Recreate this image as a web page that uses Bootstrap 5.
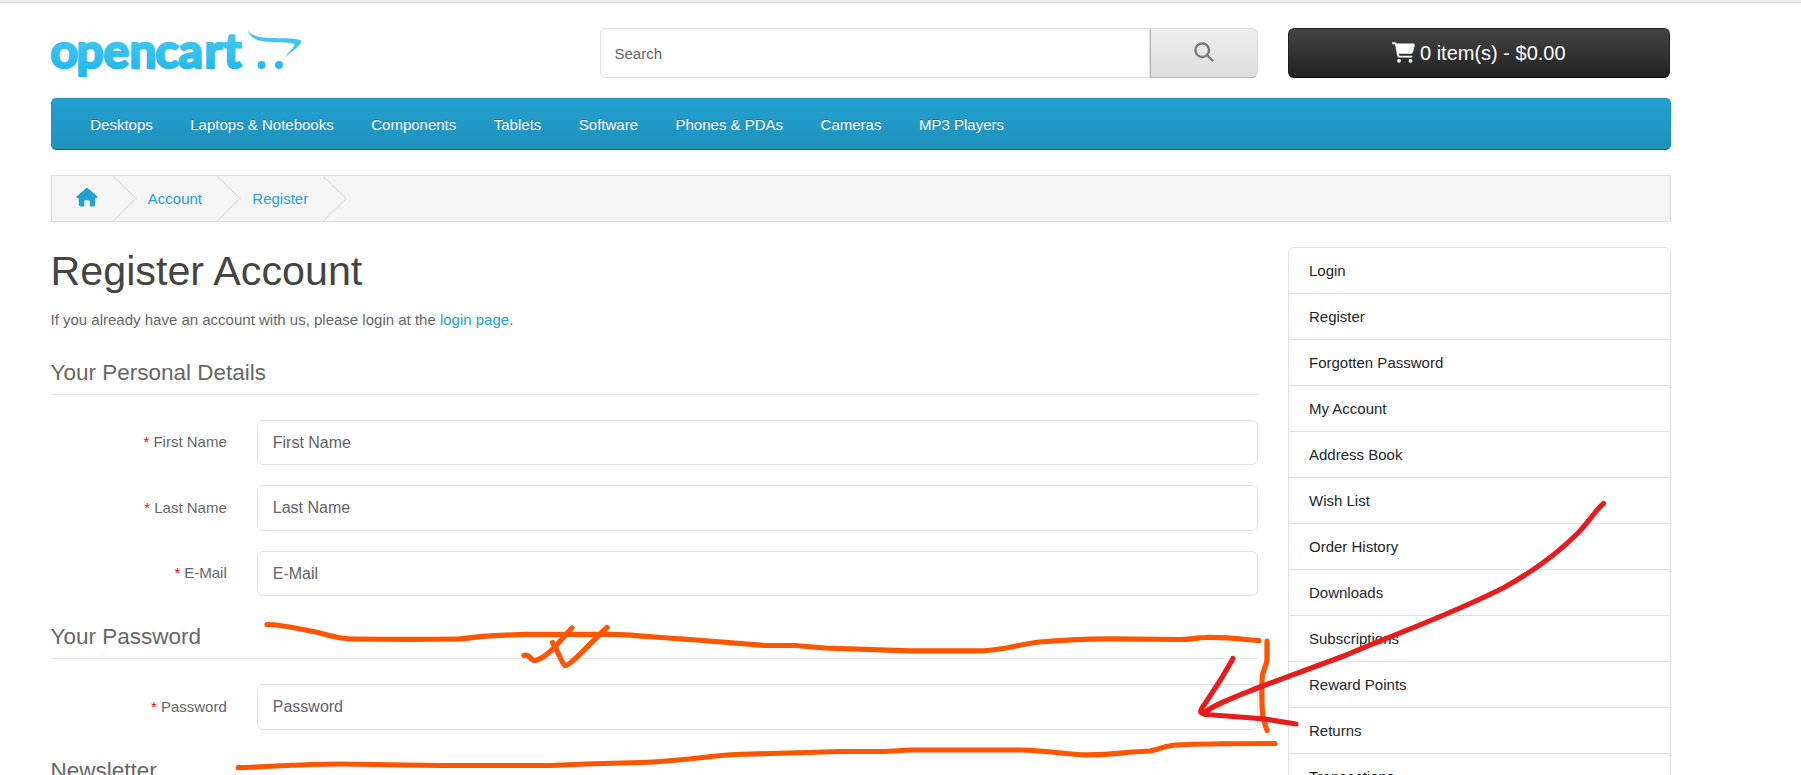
<!DOCTYPE html>
<html lang="en">
<head>
<meta charset="utf-8">
<title>Register Account</title>
<link href="https://cdn.jsdelivr.net/npm/bootstrap@5.3.0/dist/css/bootstrap.min.css" rel="stylesheet">
<style>
body{font-family:"Liberation Sans",Arial,sans-serif;font-size:15px;line-height:22.5px;color:#666;background:#fff;height:775px;overflow:hidden;position:relative}
a{color:#23a1d1;text-decoration:none}
.topstrip{height:3px;background:#eee;border-bottom:1px solid #ddd}
.shell{width:1650px;margin-left:35.5px;padding:0 15px}
.shell .row{--bs-gutter-x:30px}
.site-head{padding-top:25px;height:95px}
.search-box .form-control{height:50px;font-size:15px;border-color:#dee2e6;padding:0 13px;border-radius:6px 0 0 6px}
.form-control::placeholder{color:#5f6266;opacity:1}
.btn-search{width:108px;height:50px;background:linear-gradient(#eee,#ddd);border:1px solid #ddd;border-color:#ddd #ddd #b3b3b3 #b3b3b3;border-radius:0 6px 6px 0;padding:0 0 4px}
.btn-cart{height:50px;background:linear-gradient(#444,#222);border:1px solid #222;border-bottom-color:#000;border-radius:6px;color:#fff;font-size:20px;line-height:30px;padding:0 1px 0 0}
.menu-bar{height:52px;background:linear-gradient(#23a1d1,#1f90bb);border:1px solid #1f90bb;border-bottom-color:#145e7a;border-radius:5px;padding:0 0 0 20px}
.menu-bar .nav-link{color:#fff;padding:14px 18.75px;line-height:24px;text-shadow:0 -1px 0 rgba(0,0,0,.25)}
.crumbs{height:47px;margin:25px 0;background:#f5f5f5;border:1px solid #ddd;padding-left:24px}
.crumbs svg{display:block}
.crumbs a{padding-top:1px}
.crumb-sep{margin:0 11px 0 15.3px}
h1{font-size:41.25px;line-height:49px;color:#444;font-weight:400;margin:0 0 13px}
.sect{font-size:22.5px;line-height:34px;border-bottom:1px solid #e5e5e5;margin:24px 0 25px;padding-bottom:4px;color:#666}
.field{margin-bottom:20px}
.field .form-control{height:45.5px;font-size:16px;padding:1px 15px 0;border-color:#dee2e6;border-radius:6px}
.field label{padding-top:11.5px;line-height:22px}
.req{color:#f00;margin-right:4px;font-weight:400}
.side .list-group-item{height:46px;padding:11px 20px;line-height:23px;color:#212529;border-color:#dee2e6}
.side .list-group-item:first-child{height:47px}
.ink{position:absolute;left:0;top:0;pointer-events:none}
</style>
</head>
<body>
<div class="topstrip"></div>
<div class="shell">
  <header class="row site-head">
    <div class="col-4">
      <svg width="256" height="54" viewBox="51 26 256 54" class="d-block" style="overflow:visible">
        <defs><linearGradient id="lg" gradientUnits="userSpaceOnUse" x1="0" y1="28" x2="0" y2="68"><stop offset="0" stop-color="#4bcaf0"/><stop offset="1" stop-color="#23b8ec"/></linearGradient></defs>
        <text x="50.500 76.500 103.500 129.500 155.500 178.500 204.500 223.500" y="65.500" font-family="Lato" font-weight="700" font-size="48" fill="url(#lg)" stroke="url(#lg)" stroke-width="2.600" stroke-linejoin="round">opencart</text>
        <g fill="url(#lg)"><path d="M247.500 28.500C253 34.500 260 35.800 270 36C285 36.300 301 36 301.500 39.500C301 43 295 46.500 285 55.500C289 49.500 294.500 45 294.500 42.800C294 39.800 276 41 265 39.500C256 38.500 250 35 247.500 28.500Z"/><circle cx="261.500" cy="63" r="4"/><circle cx="279" cy="63" r="4"/></g>
      </svg>
    </div>
    <div class="col-5">
      <div class="d-flex search-box">
        <input class="form-control" placeholder="Search">
        <button class="btn btn-search flex-shrink-0" aria-label="Search"><svg width="20" height="20" viewBox="0 0 20 20" fill="none" stroke="#777" stroke-width="2.300"><circle cx="8.200" cy="8.200" r="6.800"/><path d="M13 13l6 6"/></svg></button>
      </div>
    </div>
    <div class="col-3"><button class="btn btn-cart w-100"><svg width="23" height="21" viewBox="0 0 576 512" fill="#fff" style="vertical-align:-3px;margin-right:-.5px"><path d="M0 24C0 10.700 10.700 0 24 0H69.500c22 0 41.500 12.800 50.600 32h411c26.300 0 45.500 25 38.600 50.400l-41 152.300c-8.500 31.400-37 53.300-69.500 53.300H170.700l5.400 28.500c2.200 11.300 12.100 19.500 23.600 19.500H488c13.300 0 24 10.700 24 24s-10.700 24-24 24H199.700c-34.600 0-64.300-24.600-70.700-58.500L77.400 54.500c-.7-3.800-4-6.500-7.900-6.500H24C10.700 48 0 37.300 0 24zM128 464a48 48 0 1 1 96 0 48 48 0 1 1-96 0zm336-48a48 48 0 1 1 0 96 48 48 0 1 1 0-96z"/></svg> 0 item(s) - $0.00</button></div>
  </header>
  <nav class="menu-bar">
    <ul class="nav flex-nowrap">
      <li><a class="nav-link" href="#">Desktops</a></li><li><a class="nav-link" href="#">Laptops &amp; Notebooks</a></li><li><a class="nav-link" href="#">Components</a></li><li><a class="nav-link" href="#">Tablets</a></li><li><a class="nav-link" href="#">Software</a></li><li><a class="nav-link" href="#">Phones &amp; PDAs</a></li><li><a class="nav-link" href="#">Cameras</a></li><li><a class="nav-link" href="#">MP3 Players</a></li>
    </ul>
  </nav>
  <div class="crumbs d-flex align-items-center">
    <a href="#" aria-label="Home"><svg width="22" height="20" viewBox="0 0 22 20" fill="#23a1d1" style="margin-bottom:4px"><path d="M11 .5L21.500 9.600Q22 11 20.600 11.200H19.200V17.500Q19.200 19.500 17.300 19.500H13.800V14.500Q13.800 13.200 12.500 13.200H9.600Q8.300 13.200 8.300 14.500V19.500H4.800Q2.800 19.500 2.800 17.500V11.200H1.400Q0 11 .5 9.600Z"/></svg></a>
    <svg class="crumb-sep" width="24" height="45" fill="none" stroke="#ddd" stroke-width="1.200"><path d="M0 0L23 22.500L0 45"/></svg>
    <a href="#">Account</a>
    <svg class="crumb-sep" width="24" height="45" fill="none" stroke="#ddd" stroke-width="1.200"><path d="M0 0L23 22.500L0 45"/></svg>
    <a href="#">Register</a>
    <svg class="crumb-sep" width="24" height="45" fill="none" stroke="#ddd" stroke-width="1.200"><path d="M0 0L23 22.500L0 45"/></svg>
  </div>
  <div class="row">
    <main class="col-9">
      <h1>Register Account</h1>
      <p class="mb-0">If you already have an account with us, please login at the <a href="#">login page</a>.</p>
      <h2 class="sect">Your Personal Details</h2>
      <div class="row field"><label class="col-2 text-end"><span class="req">*</span>First Name</label><div class="col-10"><input class="form-control" placeholder="First Name"></div></div>
      <div class="row field"><label class="col-2 text-end"><span class="req">*</span>Last Name</label><div class="col-10"><input class="form-control" placeholder="Last Name"></div></div>
      <div class="row field"><label class="col-2 text-end"><span class="req">*</span>E-Mail</label><div class="col-10"><input class="form-control" placeholder="E-Mail"></div></div>
      <h2 class="sect">Your Password</h2>
      <div class="row field"><label class="col-2 text-end"><span class="req">*</span>Password</label><div class="col-10"><input class="form-control" placeholder="Password"></div></div>
      <h2 class="sect">Newsletter</h2>
    </main>
    <aside class="col-3 side">
      <div class="list-group">
        <a class="list-group-item" href="#">Login</a><a class="list-group-item" href="#">Register</a><a class="list-group-item" href="#">Forgotten Password</a><a class="list-group-item" href="#">My Account</a><a class="list-group-item" href="#">Address Book</a><a class="list-group-item" href="#">Wish List</a><a class="list-group-item" href="#">Order History</a><a class="list-group-item" href="#">Downloads</a><a class="list-group-item" href="#">Subscriptions</a><a class="list-group-item" href="#">Reward Points</a><a class="list-group-item" href="#">Returns</a><a class="list-group-item" href="#">Transactions</a>
      </div>
    </aside>
  </div>
</div>
<svg class="ink" width="1801" height="775" fill="none" stroke-width="5.200" stroke-linecap="round" stroke-linejoin="round">
  <g stroke="#ff5500">
    <path d="M267 624.500C282 624.500 300 629 318 632.500C332 636 338 639 355 639C390 639.500 430 639.500 457 639C470 638.500 478 636 490 635.800L525 634.300H612C640 635 660 638 690 639.500L765 645.500H795L825 648L910 650.800H983C1005 650 1020 644 1040 642C1060 640 1090 639 1110 638.800L1180 639.500C1200 639 1195 637.500 1205 637.500C1225 637 1240 639 1259 640.700"/>
    <path d="M524 655.500C530 653 530 661 535 660.500C548 658 560 640 572 628"/>
    <path d="M552.500 642.500C558 650 561 663 565 665.500C570 666 590 643 607 627.500"/>
    <path d="M1267 641V660C1266 668 1262 670 1262 680C1261.500 700 1262 710 1263 718L1267 730.500"/>
    <path d="M238 767.700C265 767 300 764 340 764L440 765.500H550L585 764L640 762.500C680 761 700 757 735 754.500L840 751.500H885L910 750H1020C1050 750.500 1070 755 1085 754.800C1110 755 1120 753 1132 752L1150 751C1160 749 1160 747 1175 745C1200 743.500 1220 743.500 1275 743.500"/>
  </g>
  <g stroke="#e81c1c">
    <path d="M1603.500 503.500C1594 512 1588 523 1578 533C1560 551 1534 571 1504 587.500C1450 615 1400 632 1345 655.500L1260 687C1235 697 1218 703 1205 712"/>
    <path d="M1233 658.500C1219 684 1214 690 1202 708C1199 713 1201 713 1206 714.500L1240 717L1265 719L1296 724"/>
  </g>
</svg>
<script src="https://cdn.jsdelivr.net/npm/bootstrap@5.3.0/dist/js/bootstrap.bundle.min.js"></script>
</body>
</html>
